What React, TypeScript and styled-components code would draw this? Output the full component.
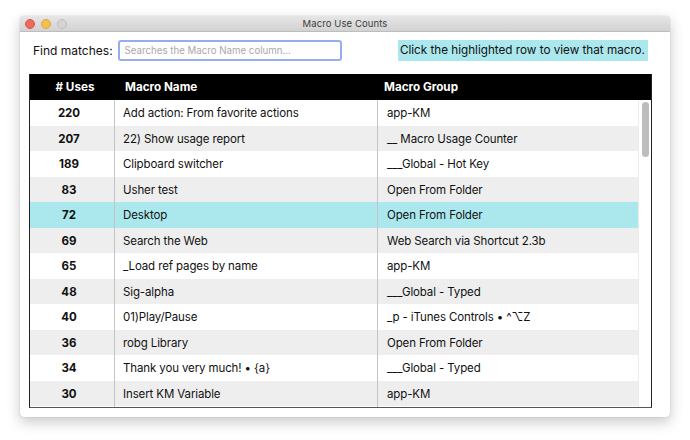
import React from "react";
import styled, { createGlobalStyle } from "styled-components";

const rows = [
  { uses: 220, name: "Add action: From favorite actions", group: "app-KM" },
  { uses: 207, name: "22) Show usage report", group: "__ Macro Usage Counter" },
  { uses: 189, name: "Clipboard switcher", group: "___Global - Hot Key" },
  { uses: 83, name: "Usher test", group: "Open From Folder" },
  { uses: 72, name: "Desktop", group: "Open From Folder" },
  { uses: 69, name: "Search the Web", group: "Web Search via Shortcut 2.3b" },
  { uses: 65, name: "_Load ref pages by name", group: "app-KM" },
  { uses: 48, name: "Sig-alpha", group: "___Global - Typed" },
  { uses: 40, name: "01)Play/Pause", group: "_p - iTunes Controls • ^⌥Z" },
  { uses: 36, name: "robg Library", group: "Open From Folder" },
  { uses: 34, name: "Thank you very much! • {a}", group: "___Global - Typed" },
  { uses: 30, name: "Insert KM Variable", group: "app-KM" },
];

const GlobalStyle = createGlobalStyle`
  html, body {
    margin: 0;
    background: #ffffff;
  }
  body {
    font-family: Inter, "Liberation Sans", sans-serif;
  }
`;

const Page = styled.div`
  width: 690px;
  height: 440px;
  padding: 16px 20px 0;
  box-sizing: border-box;
  overflow: hidden;
`;

const Window = styled.div`
  width: 650px;
  height: 401px;
  background: #ffffff;
  border-radius: 4px;
  box-shadow: 0 0 1px rgba(0, 0, 0, 0.35), 0 5px 14px rgba(0, 0, 0, 0.22);
  display: flex;
  flex-direction: column;
  overflow: hidden;
`;

const TitleBar = styled.div`
  height: 15px;
  flex: none;
  display: flex;
  align-items: center;
  justify-content: center;
  position: relative;
  background: linear-gradient(#e6e6e6, #d2d2d2);
  border-bottom: 1px solid #bdbdbd;
  font-size: 9.5px;
  letter-spacing: 0.1px;
  color: #3c3c3c;
`;

const Lights = styled.div`
  position: absolute;
  left: 5px;
  top: 3px;
  display: flex;
  gap: 6px;
`;

const Light = styled.span<{ $color: string; $edge: string }>`
  width: 10px;
  height: 10px;
  border-radius: 50%;
  box-sizing: border-box;
  background: ${({ $color }) => $color};
  border: 1px solid ${({ $edge }) => $edge};
`;

const Toolbar = styled.div`
  height: 42px;
  flex: none;
  display: flex;
  align-items: center;
  padding: 0 22px 6px 13px;
  box-sizing: border-box;
`;

const FindLabel = styled.label`
  font-size: 12px;
  color: #111111;
  margin-right: 5px;
`;

const SearchInput = styled.input`
  width: 224px;
  height: 21px;
  box-sizing: border-box;
  border: 2px solid #94aef2;
  border-radius: 3px;
  padding: 0 5px;
  font-family: inherit;
  font-size: 9.7px;
  outline: none;
  &::placeholder {
    color: #a8a8a8;
    opacity: 1;
  }
`;

const Hint = styled.div`
  margin-left: auto;
  height: 21px;
  line-height: 21px;
  padding: 0 3px 0 2px;
  background: #abe8ee;
  font-size: 11.7px;
  color: #111111;
`;

const Table = styled.div`
  margin-left: 9px;
  width: 623px;
  height: 334px;
  box-sizing: border-box;
  border: 1px solid #222222;
  border-top: none;
  border-bottom-color: #555555;
  display: flex;
  flex-direction: column;
  overflow: hidden;
`;

const HeaderRow = styled.div`
  height: 26px;
  flex: none;
  margin: 0 -1px;
  display: grid;
  grid-template-columns: 86px 259px 1fr;
  align-items: center;
  background: #000000;
  color: #ffffff;
  font-size: 11.7px;
  font-weight: 700;
`;

const HeaderCell = styled.div<{ $center?: boolean }>`
  text-align: ${({ $center }) => ($center ? "center" : "left")};
  padding-left: ${({ $center }) => ($center ? "6px" : "10px")};
`;

const Body = styled.div`
  flex: 1;
  display: flex;
  min-height: 0;
`;

const RowList = styled.div`
  flex: 1;
  min-width: 0;
`;

const Row = styled.div<{ $striped: boolean; $active: boolean }>`
  height: 25.5px;
  display: grid;
  grid-template-columns: 85px 263px 1fr;
  font-size: 11.5px;
  letter-spacing: -0.12px;
  line-height: 26px;
  color: #111111;
  background: ${({ $striped, $active }) =>
    $active ? "#abe8ee" : $striped ? "#eeeeee" : "#ffffff"};
`;

const UsesCell = styled.div`
  text-align: center;
  padding-right: 6px;
  font-weight: 700;
  letter-spacing: 0;
  border-right: 1px solid #c4c4c4;
`;

const NameCell = styled.div`
  padding-left: 8px;
  border-right: 1px solid #c4c4c4;
`;

const GroupCell = styled.div`
  padding-left: 9px;
`;

const ScrollTrack = styled.div`
  width: 13px;
  flex: none;
  background: #ffffff;
  border-left: 1px solid #ececec;
  box-sizing: border-box;
  position: relative;
`;

const ScrollThumb = styled.div`
  position: absolute;
  top: 2px;
  left: 3px;
  width: 7px;
  height: 55px;
  border-radius: 4px;
  background: #bdbdbd;
`;

export default function App() {
  return (
    <Page>
      <GlobalStyle />
      <Window>
        <TitleBar>
          <Lights>
            <Light $color="#ed6a5e" $edge="#d9564b" />
            <Light $color="#f4bf4f" $edge="#dca63c" />
            <Light $color="#d4d4d4" $edge="#bdbdbd" />
          </Lights>
          Macro Use Counts
        </TitleBar>
        <Toolbar>
          <FindLabel>Find matches:</FindLabel>
          <SearchInput placeholder="Searches the Macro Name column..." />
          <Hint>Click the highlighted row to view that macro.</Hint>
        </Toolbar>
        <Table>
          <HeaderRow>
            <HeaderCell $center># Uses</HeaderCell>
            <HeaderCell>Macro Name</HeaderCell>
            <HeaderCell>Macro Group</HeaderCell>
          </HeaderRow>
          <Body>
            <RowList>
              {rows.map((row, i) => (
                <Row key={row.uses} $striped={i % 2 === 1} $active={row.uses === 72}>
                  <UsesCell>{row.uses}</UsesCell>
                  <NameCell>{row.name}</NameCell>
                  <GroupCell>{row.group}</GroupCell>
                </Row>
              ))}
            </RowList>
            <ScrollTrack>
              <ScrollThumb />
            </ScrollTrack>
          </Body>
        </Table>
      </Window>
    </Page>
  );
}
